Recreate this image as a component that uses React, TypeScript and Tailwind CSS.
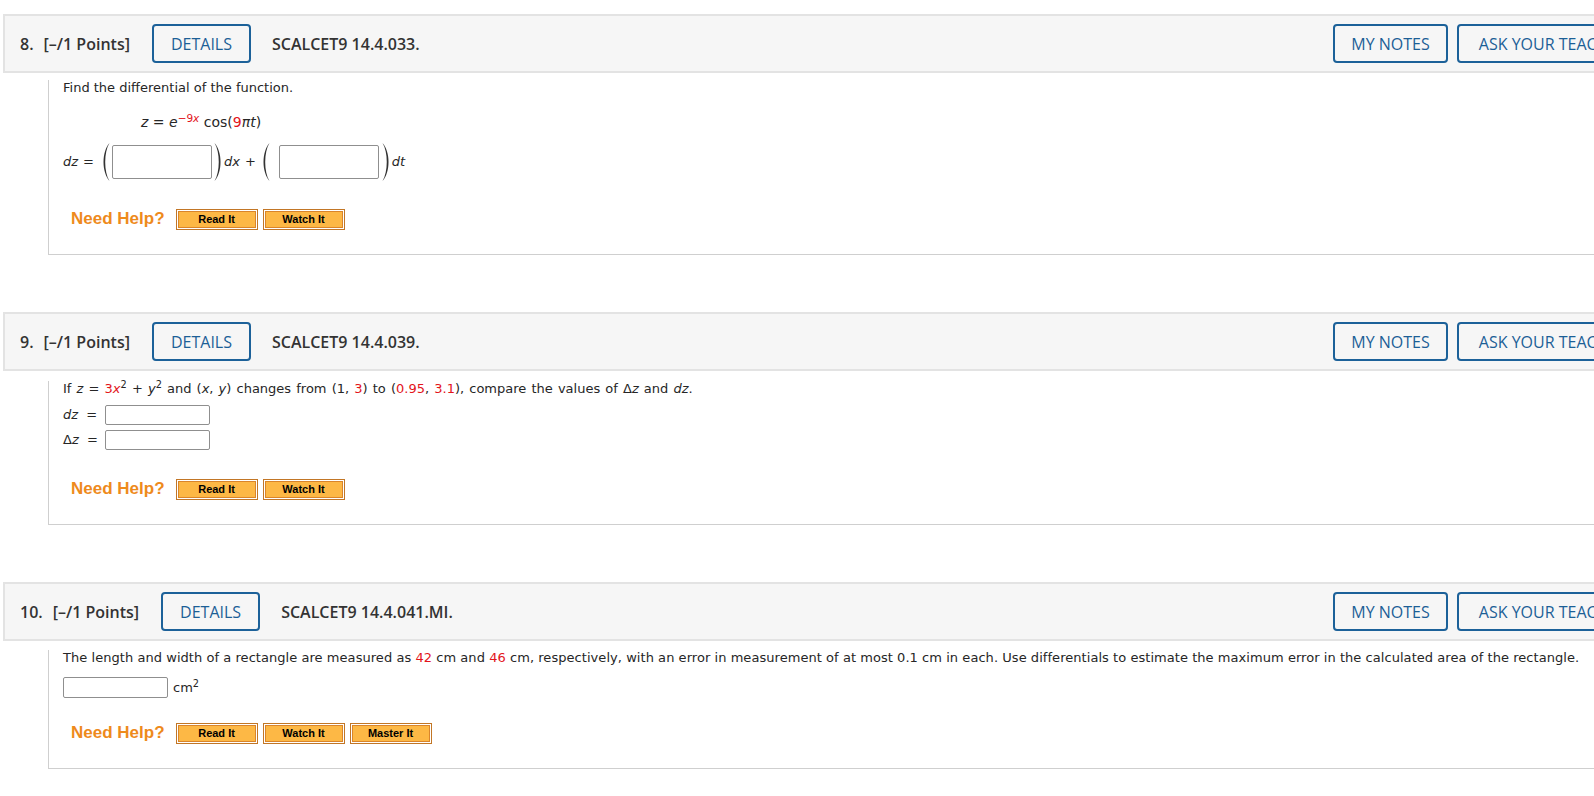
import type { ReactNode } from "react";

const red = "text-[#e3141b]";

function Paren({ side }: { side: "left" | "right" }) {
  return (
    <svg width="11" height="40" viewBox="0 0 11 40" className="shrink-0" aria-hidden="true">
      {side === "left" ? (
        <path d="M9.5 1 C1.5 10 1.5 30 9.5 39 C3.8 30 3.8 10 9.5 1 Z" fill="#333" />
      ) : (
        <path d="M1.5 1 C9.5 10 9.5 30 1.5 39 C7.2 30 7.2 10 1.5 1 Z" fill="#333" />
      )}
    </svg>
  );
}

function HelpButton({ label }: { label: string }) {
  return (
    <span className="flex h-[21px] w-[82px] border border-[#c27626] p-[1px]">
      <span className="flex flex-1 items-center justify-center border border-[#d9852b] bg-[#fdb845] font-['Liberation_Sans',Arial,sans-serif] text-[11px] font-bold text-black">
        {label}
      </span>
    </span>
  );
}

function NeedHelp({ buttons, className }: { buttons: string[]; className?: string }) {
  return (
    <div className={"flex h-[22px] items-center pl-[8px] " + (className ?? "")}>
      <span className="mr-[11px] font-['Liberation_Sans',Arial,sans-serif] text-[17px] font-bold text-[#ee8a1c]">
        Need Help?
      </span>
      <div className="flex gap-[5px]">
        {buttons.map((b) => (
          <HelpButton key={b} label={b} />
        ))}
      </div>
    </div>
  );
}

function Input({ className }: { className: string }) {
  return <span className={"inline-block shrink-0 rounded-[2px] border border-[#8f8f8f] bg-white " + className} />;
}

function QuestionHeader({ num, code }: { num: string; code: string }) {
  return (
    <div className="flex h-[59px] items-center border-2 border-[#e3e3e3] bg-[#f6f6f6] pl-[15px] pr-[10px] font-['Open_Sans',sans-serif] text-[16px] text-[#333]">
      <span className="mr-[10px] font-semibold">{num}</span>
      <span className="font-semibold">[–/1 Points]</span>
      <span className="ml-[22px] flex h-[39px] items-center rounded-[4px] border-2 border-[#1c6199] px-[17px] font-medium text-[#1c5f96]">
        DETAILS
      </span>
      <span className="ml-[21px] font-semibold">{code}</span>
      <span className="ml-auto flex h-[39px] w-[115px] items-center justify-center rounded-[4px] border-2 border-[#1c6199] font-medium text-[#1c5f96]">
        MY NOTES
      </span>
      <span className="ml-[9px] flex h-[39px] w-[192px] items-center justify-center whitespace-nowrap rounded-[4px] border-2 border-[#1c6199] font-medium text-[#1c5f96]">
        ASK YOUR TEACHER
      </span>
    </div>
  );
}

function QuestionBody({ children }: { children: ReactNode }) {
  return (
    <div className="ml-[45px] border-b border-l border-[#cfcfcf] pb-[24px] pl-[14px] font-['DejaVu_Sans',Verdana,sans-serif] text-[13px] text-[#262626]">
      {children}
    </div>
  );
}

export default function App() {
  return (
    <div className="h-[796px] w-[1594px] overflow-hidden bg-white">
      <div className="ml-[3px] w-[1658px] pt-[14px]">
        <QuestionHeader num="8." code="SCALCET9 14.4.033." />
        <QuestionBody>
          <p className="mt-[7px] h-[16px] leading-[16px]">Find the differential of the function.</p>
          <p className="mt-[17px] ml-[78px] h-[18px] text-[14px] leading-[18px]">
            <i>z</i> = <i>e</i>
            <sup className={red}>
              −9<i>x</i>
            </sup>{" "}
            cos(<span className={red}>9</span>
            <i>πt</i>)
          </p>
          <div className="mt-[11px] flex h-[40px] items-center">
            <i>dz</i>
            <span className="ml-[5px]">=</span>
            <span className="ml-[6px]">
              <Paren side="left" />
            </span>
            <Input className="ml-[1px] h-[34px] w-[100px]" />
            <span className="ml-[1px]">
              <Paren side="right" />
            </span>
            <i>dx</i>
            <span className="ml-[5px]">+</span>
            <span className="ml-[4px]">
              <Paren side="left" />
            </span>
            <Input className="ml-[8px] h-[34px] w-[100px]" />
            <span className="ml-[2px]">
              <Paren side="right" />
            </span>
            <i>dt</i>
          </div>
          <NeedHelp className="mt-[26px]" buttons={["Read It", "Watch It"]} />
        </QuestionBody>

        <div className="mt-[57px]">
          <QuestionHeader num="9." code="SCALCET9 14.4.039." />
        </div>
        <QuestionBody>
          <p className="mt-[10px] h-[16px] leading-[16px] [word-spacing:1px]">
            If <i>z</i> = <span className={red}>3<i>x</i></span>
            <sup>2</sup> + <i>y</i>
            <sup>2</sup> and (<i>x</i>, <i>y</i>) changes from (1, <span className={red}>3</span>) to (
            <span className={red}>0.95</span>, <span className={red}>3.1</span>), compare the values of Δ<i>z</i> and{" "}
            <i>dz</i>.
          </p>
          <div className="mt-[8px] flex h-[20px] items-center">
            <span className="w-[42px]">
              <i>dz</i>&nbsp; =
            </span>
            <Input className="h-[20px] w-[105px]" />
          </div>
          <div className="mt-[5px] flex h-[20px] items-center">
            <span className="w-[42px]">
              Δ<i>z</i>&nbsp; =
            </span>
            <Input className="h-[20px] w-[105px]" />
          </div>
          <NeedHelp className="mt-[28px]" buttons={["Read It", "Watch It"]} />
        </QuestionBody>

        <div className="mt-[57px]">
          <QuestionHeader num="10." code="SCALCET9 14.4.041.MI." />
        </div>
        <QuestionBody>
          <p className="mt-[9px] h-[16px] whitespace-nowrap leading-[16px] tracking-[0.05px]">
            The length and width of a rectangle are measured as <span className={red}>42</span> cm and{" "}
            <span className={red}>46</span> cm, respectively, with an error in measurement of at most 0.1 cm in each. Use
            differentials to estimate the maximum error in the calculated area of the rectangle.
          </p>
          <div className="mt-[11px] flex h-[21px] items-center">
            <Input className="h-[21px] w-[105px]" />
            <span className="ml-[5px]">
              cm<sup>2</sup>
            </span>
          </div>
          <NeedHelp className="mt-[24px]" buttons={["Read It", "Watch It", "Master It"]} />
        </QuestionBody>
      </div>
    </div>
  );
}
